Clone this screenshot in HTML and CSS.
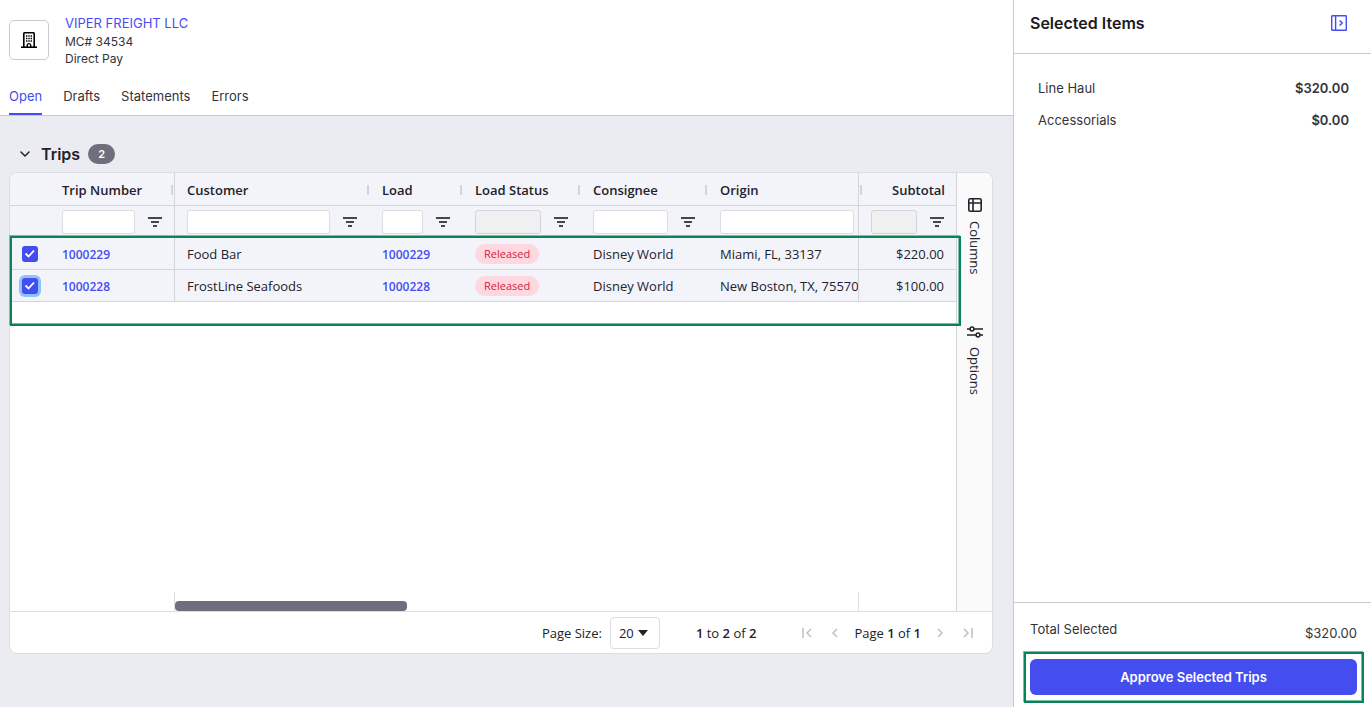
FILE: index.html
```html
<!DOCTYPE html>
<html lang="en">
  <head>
    <meta charset="utf-8" />
    <title>Viper Freight LLC - Trips</title>
    <meta name="viewport" content="width=device-width, initial-scale=1" />
    <link rel="stylesheet" href="styles.css">
  </head>
  <body>
    <svg class="defs" width="0" height="0" aria-hidden="true">
      <symbol id="i-filter" viewBox="0 0 14 10">
        <path d="M0 0h14v2H0zM3 4h8v2H3zM5 8h4v2H5z" fill="currentColor" />
      </symbol>
    </svg>
    <main>
      <header class="company">
        <div class="company-info">
          <div class="company-icon">
            <svg width="16" height="16" viewBox="0 0 16 16" fill="none" stroke="#000">
              <path d="M0 15.2h16" stroke-width="1.6" />
              <path d="M2.8 15V1.5q0-.7.7-.7h9q.7 0 .7.7V15" stroke-width="1.6" />
              <path d="M5 4h6M5 6.5h6M5 9h6" stroke-width="1.4" stroke-dasharray="1.4 .9" />
              <path d="M6.2 15v-1.6a1.8 1.8 0 0 1 3.6 0V15" stroke-width="1.4" />
            </svg>
          </div>
          <div class="company-text">
            <a href="#">VIPER FREIGHT LLC</a>
            <div>MC# 34534</div>
            <div>Direct Pay</div>
          </div>
        </div>
        <nav class="tabs">
          <a class="active" href="#open">Open</a>
          <a href="#drafts">Drafts</a>
          <a href="#statements">Statements</a>
          <a href="#errors">Errors</a>
        </nav>
      </header>
      <section class="trips">
        <h2>
          <button class="toggle" type="button" aria-label="Collapse trips">
            <svg width="10" height="6" viewBox="0 0 10 6" fill="none" stroke="currentColor" stroke-width="1.5" stroke-linecap="round" stroke-linejoin="round"><path d="M1 1l4 4 4-4" /></svg>
          </button>
          Trips <span class="count">2</span>
        </h2>
        <div class="grid">
          <div class="grid-top">
            <div class="grid-body">
              <table>
                <colgroup>
                  <col class="c-check"><col class="c-trip"><col class="c-customer"><col class="c-load">
                  <col class="c-status"><col class="c-consignee"><col><col class="c-subtotal">
                </colgroup>
                <thead>
                  <tr class="titles">
                    <td></td>
                    <th class="pin-left"><div class="title">Trip Number</div></th>
                    <th><div class="title">Customer</div></th>
                    <th><div class="title">Load</div></th>
                    <th><div class="title">Load Status</div></th>
                    <th><div class="title">Consignee</div></th>
                    <th><div class="title last">Origin</div></th>
                    <th class="pin-right"><div class="title reverse">Subtotal</div></th>
                  </tr>
                  <tr class="filters">
                    <td></td>
                    <td class="pin-left"><div class="filter"><input type="text" aria-label="Filter trip number"><button type="button" aria-label="Trip number filter menu"><svg width="14" height="10"><use href="#i-filter" /></svg></button></div></td>
                    <td><div class="filter"><input type="text" aria-label="Filter customer"><button type="button" aria-label="Customer filter menu"><svg width="14" height="10"><use href="#i-filter" /></svg></button></div></td>
                    <td><div class="filter"><input type="text" aria-label="Filter load"><button type="button" aria-label="Load filter menu"><svg width="14" height="10"><use href="#i-filter" /></svg></button></div></td>
                    <td><div class="filter"><input type="text" aria-label="Filter load status" disabled><button type="button" aria-label="Load status filter menu"><svg width="14" height="10"><use href="#i-filter" /></svg></button></div></td>
                    <td><div class="filter"><input type="text" aria-label="Filter consignee"><button type="button" aria-label="Consignee filter menu"><svg width="14" height="10"><use href="#i-filter" /></svg></button></div></td>
                    <td><div class="filter wide"><input type="text" aria-label="Filter origin"></div></td>
                    <td class="pin-right"><div class="filter"><input type="text" aria-label="Filter subtotal" disabled><button type="button" aria-label="Subtotal filter menu"><svg width="14" height="10"><use href="#i-filter" /></svg></button></div></td>
                  </tr>
                </thead>
                <tbody>
                  <tr>
                    <td><input type="checkbox" aria-label="Select trip 1000229" checked></td>
                    <td class="pin-left"><a href="#">1000229</a></td>
                    <td>Food Bar</td>
                    <td><a href="#">1000229</a></td>
                    <td><span class="status">Released</span></td>
                    <td>Disney World</td>
                    <td>Miami, FL, 33137</td>
                    <td class="pin-right amount">$220.00</td>
                  </tr>
                  <tr>
                    <td><input class="focused" type="checkbox" aria-label="Select trip 1000228" checked></td>
                    <td class="pin-left"><a href="#">1000228</a></td>
                    <td>FrostLine Seafoods</td>
                    <td><a href="#">1000228</a></td>
                    <td><span class="status">Released</span></td>
                    <td>Disney World</td>
                    <td>New Boston, TX, 75570</td>
                    <td class="pin-right amount">$100.00</td>
                  </tr>
                </tbody>
              </table>
              <div class="scroll">
                <div class="scroll-left"></div>
                <div class="scroll-track"><div class="scroll-thumb"></div></div>
                <div class="scroll-right"></div>
              </div>
              <div class="highlight rows-highlight"></div>
            </div>
            <div class="side-bar">
              <button type="button">
                <svg width="14" height="14" viewBox="0 0 14 14" fill="none" stroke="currentColor" stroke-width="1.6"><rect x=".8" y=".8" width="12.4" height="12.4" rx="1.5" /><path d="M1 5h12M5 1v12" /></svg>
                <span>Columns</span>
              </button>
              <button type="button">
                <svg width="16" height="12" viewBox="0 0 16 12" fill="none" stroke="currentColor" stroke-width="1.5"><path d="M0 3h3M7 3h9M0 9h9M13 9h3" /><circle cx="5" cy="3" r="1.9" /><circle cx="11" cy="9" r="1.9" /></svg>
                <span>Options</span>
              </button>
            </div>
          </div>
          <div class="paging">
            <label for="page-size">Page Size:</label>
            <span class="select">
              <select id="page-size"><option>20</option><option>50</option><option>100</option></select>
              <svg width="10" height="6" viewBox="0 0 10 6"><path d="M0 0h10L5 6z" fill="currentColor" /></svg>
            </span>
            <span class="range"><b>1</b> to <b>2</b> of <b>2</b></span>
            <div class="pages">
              <button type="button" aria-label="First page" disabled><svg width="10" height="10" viewBox="0 0 10 10"><path d="M1 0v10M9 1L5 5l4 4" /></svg></button>
              <button type="button" aria-label="Previous page" disabled><svg width="10" height="10" viewBox="0 0 10 10"><path d="M7 1L3 5l4 4" /></svg></button>
              <span>Page <b>1</b> of <b>1</b></span>
              <button type="button" aria-label="Next page" disabled><svg width="10" height="10" viewBox="0 0 10 10"><path d="M3 1l4 4-4 4" /></svg></button>
              <button type="button" aria-label="Last page" disabled><svg width="10" height="10" viewBox="0 0 10 10"><path d="M1 1l4 4-4 4M9 0v10" /></svg></button>
            </div>
          </div>
        </div>
      </section>
    </main>
    <aside>
      <header class="aside-header">
        <h1>Selected Items</h1>
        <button type="button" aria-label="Close panel">
          <svg width="16" height="16" viewBox="0 0 16 16" fill="none" stroke="currentColor" stroke-width="1.4"><rect x=".7" y=".7" width="14.6" height="14.6" rx=".6" /><path d="M4.6 1v14M8.6 5.4L11.2 8l-2.6 2.6" /></svg>
        </button>
      </header>
      <dl class="items">
        <div><dt>Line Haul</dt><dd>$320.00</dd></div>
        <div><dt>Accessorials</dt><dd>$0.00</dd></div>
      </dl>
      <footer>
        <div class="total"><span>Total Selected</span><span class="sum">$320.00</span></div>
        <div class="approve">
          <button type="button">Approve Selected Trips</button>
          <div class="highlight"></div>
        </div>
      </footer>
    </aside>
  </body>
</html>
```
FILE: styles.css
```css
* {
  box-sizing: border-box;
}
body {
  display: flex;
  margin: 0;
  min-height: 100vh;
  font-family: Inter, "Liberation Sans", sans-serif;
  font-size: 13px;
  color: #33333d;
  background-color: #ebecf1;
}
a {
  color: #444ef0;
  text-decoration: none;
}
button {
  border: 0;
  padding: 0;
  background: none;
  color: inherit;
  font: inherit;
}
svg {
  display: block;
}
.defs {
  position: absolute;
}
main {
  display: flex;
  flex-direction: column;
  flex: 1;
  min-width: 0;
}

/* company header */
.company {
  padding: 14px 9px 0;
  background-color: #fff;
  border-bottom: 1px solid #c9c9d3;
}
.company-info {
  display: flex;
  gap: 16px;
}
.company-icon {
  display: flex;
  align-items: center;
  justify-content: center;
  width: 40px;
  height: 40px;
  margin-top: 6px;
  border: 1px solid #c9c9d3;
  border-radius: 5px;
}
.company-text {
  line-height: 17px;
  font-size: 12px;
}
.company-text a {
  display: block;
  line-height: 19px;
  font-size: 13px;
}
.tabs {
  display: flex;
  gap: 21px;
  margin-top: 11px;
}
.tabs a {
  padding: 10px 0 9px;
  line-height: 16px;
  color: #33333d;
  border-bottom: 2px solid transparent;
}
.tabs a.active {
  color: #444ef0;
  border-color: #444ef0;
}

/* trips */
.trips {
  display: flex;
  flex-direction: column;
  flex: 1;
  padding: 26px 20px 53px 9px;
}
h2 {
  display: flex;
  align-items: center;
  height: 24px;
  margin: 0 0 6px;
  font-size: 16px;
  font-weight: 600;
  color: #22222a;
}
.toggle {
  padding: 8px 11px;
}
.count {
  margin-left: 8px;
  width: 27px;
  line-height: 20px;
  border-radius: 10px;
  background-color: #6f6e7c;
  color: #fff;
  font-size: 11px;
  text-align: center;
}
.grid {
  display: flex;
  flex-direction: column;
  flex: 1;
  border: 1px solid #dcdde0;
  border-radius: 8px;
  background-color: #fff;
  font-family: "Open Sans", "Noto Sans", sans-serif;
  color: #22222a;
}
.grid-top {
  display: flex;
  flex: 1;
}
.grid-body {
  position: relative;
  display: flex;
  flex-direction: column;
  justify-content: space-between;
  flex: 1;
  min-width: 0;
}
table {
  width: 100%;
  table-layout: fixed;
  border-collapse: separate;
  border-spacing: 0;
}
.c-check {
  width: 40px;
}
.c-trip {
  width: 125px;
}
.c-customer {
  width: 195px;
}
.c-load {
  width: 93px;
}
.c-status {
  width: 118px;
}
.c-consignee {
  width: 127px;
}
.c-subtotal {
  width: 98px;
}
th,
td {
  height: 32px;
  padding: 0 0 0 12px;
  border-bottom: 1px solid #d3d5db;
  background-color: #f3f4fa;
  text-align: left;
  white-space: nowrap;
  overflow: hidden;
}
.titles th {
  height: 33px;
  padding-top: 2px;
  font-weight: 600;
}
.titles td:first-child {
  border-top-left-radius: 7px;
}
.pin-left {
  border-right: 1px solid #d3d5db;
}
.pin-right {
  border-left: 1px solid #d3d5db;
}
.title {
  display: flex;
  align-items: center;
  justify-content: space-between;
  padding-right: 1px;
}
.title::after {
  content: "";
  width: 2px;
  height: 10px;
  background-color: #d3d5db;
}
.title.last::after {
  display: none;
}
th.pin-right {
  padding-left: 1px;
}
.title.reverse {
  flex-direction: row-reverse;
  padding-right: 11px;
}
.filter {
  display: flex;
}
.filter input {
  flex: 1;
  min-width: 0;
  height: 24px;
  border: 1px solid #dcdde0;
  border-radius: 3px;
  background-color: #fff;
}
.filter input:disabled {
  border-color: #d3d5db;
  background-color: #f0f0f0;
}
.filter button {
  display: flex;
  align-items: center;
  justify-content: center;
  width: 40px;
  color: #45454d;
}
.pin-left .filter button,
.pin-right .filter button {
  width: 39px;
}
.filter.wide {
  padding-right: 4px;
}
tbody a {
  font-size: 12px;
  font-weight: 600;
}
.amount {
  padding: 0 12px 0 0;
  text-align: right;
}
input[type="checkbox"] {
  display: block;
  appearance: none;
  width: 16px;
  height: 16px;
  margin: 0;
  border-radius: 3px;
  background: #444ef0 url("data:image/svg+xml,%3Csvg xmlns='http://www.w3.org/2000/svg' viewBox='0 0 16 16' fill='none' stroke='white' stroke-width='1.8'%3E%3Cpath d='M3.5 7.5l3 3 5.5-6'/%3E%3C/svg%3E");
}
input.focused {
  box-shadow: 0 0 0 3px #8cc4f8;
}
.status {
  display: inline-block;
  padding: 0 9px;
  line-height: 20px;
  border-radius: 10px;
  background-color: #ffd8df;
  color: #cf2344;
  font-size: 11px;
  font-weight: 500;
  vertical-align: middle;
}
.scroll {
  display: flex;
  height: 19px;
}
.scroll-left {
  width: 165px;
  border-right: 1px solid #dcdde0;
}
.scroll-track {
  display: flex;
  align-items: flex-end;
  flex: 1;
}
.scroll-thumb {
  width: 34%;
  height: 10px;
  border-radius: 4px;
  background-color: #6f6e7c;
}
.scroll-right {
  width: 98px;
  border-left: 1px solid #dcdde0;
}

/* green frames over the page */
.highlight {
  position: absolute;
  inset: -7px -7px -8px -6px;
  border: 2px solid #088458;
  box-shadow: -1px -1px 0 #7cbda5, inset -1px -1px 0 #7cbda5;
  pointer-events: none;
}
.rows-highlight {
  inset: 63px -5px auto 0;
  height: 90px;
}
.side-bar {
  display: flex;
  flex-direction: column;
  gap: 52px;
  width: 36px;
  padding-top: 25px;
  border-left: 1px solid #d3d5db;
  border-top-right-radius: 7px;
  background-color: #fafafa;
}
.side-bar button {
  display: flex;
  flex-direction: column;
  align-items: center;
  gap: 9px;
}
.side-bar span {
  writing-mode: vertical-rl;
  line-height: 18px;
}
.paging {
  display: flex;
  align-items: center;
  justify-content: flex-end;
  height: 42px;
  padding-right: 19px;
  border-top: 1px solid #dcdde0;
}
.paging b {
  font-weight: 600;
}
.select {
  display: grid;
  align-items: center;
  margin: 0 36px 0 8px;
}
.select select,
.select svg {
  grid-area: 1 / 1;
}
.select select {
  appearance: none;
  width: 50px;
  height: 32px;
  padding: 0 8px;
  border: 1px solid #dcdde0;
  border-radius: 4px;
  background-color: #fff;
  color: inherit;
  font: inherit;
}
.select svg {
  justify-self: end;
  margin-right: 12px;
  pointer-events: none;
}
.range {
  margin-right: 46px;
}
.pages {
  display: flex;
  align-items: center;
  gap: 18px;
}
.pages span {
  margin: 0 -4px;
}
.pages path {
  fill: none;
  stroke: #bfc0c4;
  stroke-width: 1.5;
}

/* selected items */
aside {
  display: flex;
  flex-direction: column;
  width: 358px;
  border-left: 1px solid #c9c9d3;
  background-color: #fff;
}
.aside-header {
  display: flex;
  align-items: center;
  justify-content: space-between;
  height: 54px;
  padding: 0 24px 8px 16px;
  border-bottom: 1px solid #c9c9d3;
}
h1 {
  margin: 0;
  font-size: 16px;
  font-weight: 600;
  color: #1a1a22;
}
.aside-header button {
  color: #444ef0;
}
.items {
  flex: 1;
  margin: 0;
  padding: 18px 22px 0 24px;
}
.items div {
  display: flex;
  align-items: center;
  justify-content: space-between;
  height: 32px;
}
.items dd {
  margin: 0;
  font-weight: 600;
}
footer {
  padding: 18px 14px 12px 16px;
  border-top: 1px solid #c9c9d3;
}
.total {
  display: flex;
  justify-content: space-between;
  height: 20px;
  margin-bottom: 18px;
}
.sum {
  align-self: flex-end;
}
.approve {
  position: relative;
}
.approve button {
  width: 100%;
  height: 36px;
  border-radius: 6px;
  background-color: #444ef0;
  color: #fff;
  font-weight: 600;
}
```
